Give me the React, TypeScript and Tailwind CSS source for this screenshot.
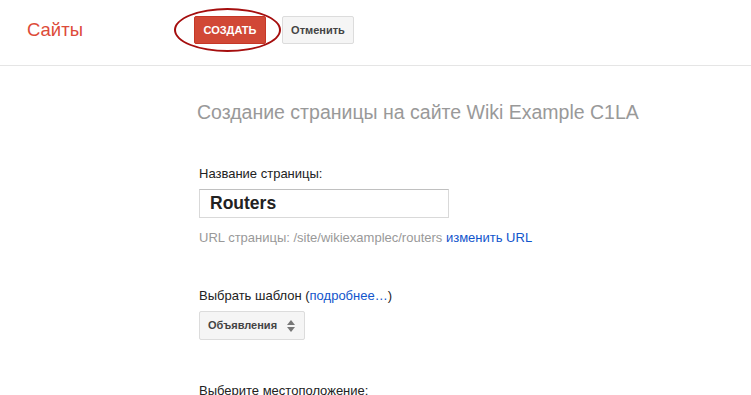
import React from "react";

export default function App() {
  return (
    <div className="w-[751px] h-[395px] overflow-hidden bg-white font-['Liberation_Sans',Arial,sans-serif] text-[13px] text-[#222]">
      {/* Шапка */}
      <div className="h-[66px] border-b border-[#e5e5e5] flex items-start">
        <div className="w-[194px] pl-[27px] pt-[16px] text-[18.5px] leading-[28px] text-[#dd4b39]">Сайты</div>
        <div className="flex gap-[16px] pt-[16px]">
          <div className="relative">
            <button className="h-[28px] w-[72px] bg-[#d14836] border border-[#c53727] rounded-[2px] text-white text-[11px] font-bold">
              СОЗДАТЬ
            </button>
            <div className="absolute left-[-20px] top-[-8px] w-[107px] h-[44px] rounded-[50%] border-2 border-[#a50e0e] pointer-events-none" />
          </div>
          <button className="h-[28px] w-[72px] bg-[#f5f5f5] border border-[#dcdcdc] rounded-[2px] text-[#444] text-[11px] font-bold">
            Отменить
          </button>
        </div>
      </div>

      {/* Основная часть */}
      <div className="pl-[199px]">
        <h1 className="ml-[-2px] mt-[34px] text-[19.5px] leading-[24px] text-[#999]">Создание страницы на сайте Wiki Example C1LA</h1>

        <div className="mt-[42px] leading-[16px]">Название страницы:</div>
        <div className="mt-[7px] w-[250px] h-[29px] border border-[#d9d9d9] border-t-[#c0c0c0] flex items-center pl-[10px] text-[17.5px] font-bold text-[#222]">
          Routers
        </div>
        <div className="mt-[12px] leading-[16px] text-[#999]">
          URL страницы: /site/wikiexamplec/routers <span className="text-[#15c]">изменить URL</span>
        </div>

        <div className="mt-[42px] leading-[16px]">
          Выбрать шаблон (<span className="text-[#15c]">подробнее…</span>)
        </div>
        <div className="mt-[7px] w-[106px] h-[29px] bg-[#f5f5f5] border border-[#dcdcdc] rounded-[2px] flex items-center pl-[8px] gap-[10px] text-[11px] font-bold text-[#444]">
          Объявления
          <svg width="8" height="12" viewBox="0 0 8 12">
            <path d="M4 0 L8 5 H0 Z" fill="#777" />
            <path d="M4 12 L8 7 H0 Z" fill="#777" />
          </svg>
        </div>

        <div className="mt-[43px] leading-[16px]">Выберите местоположение:</div>
      </div>
    </div>
  );
}
